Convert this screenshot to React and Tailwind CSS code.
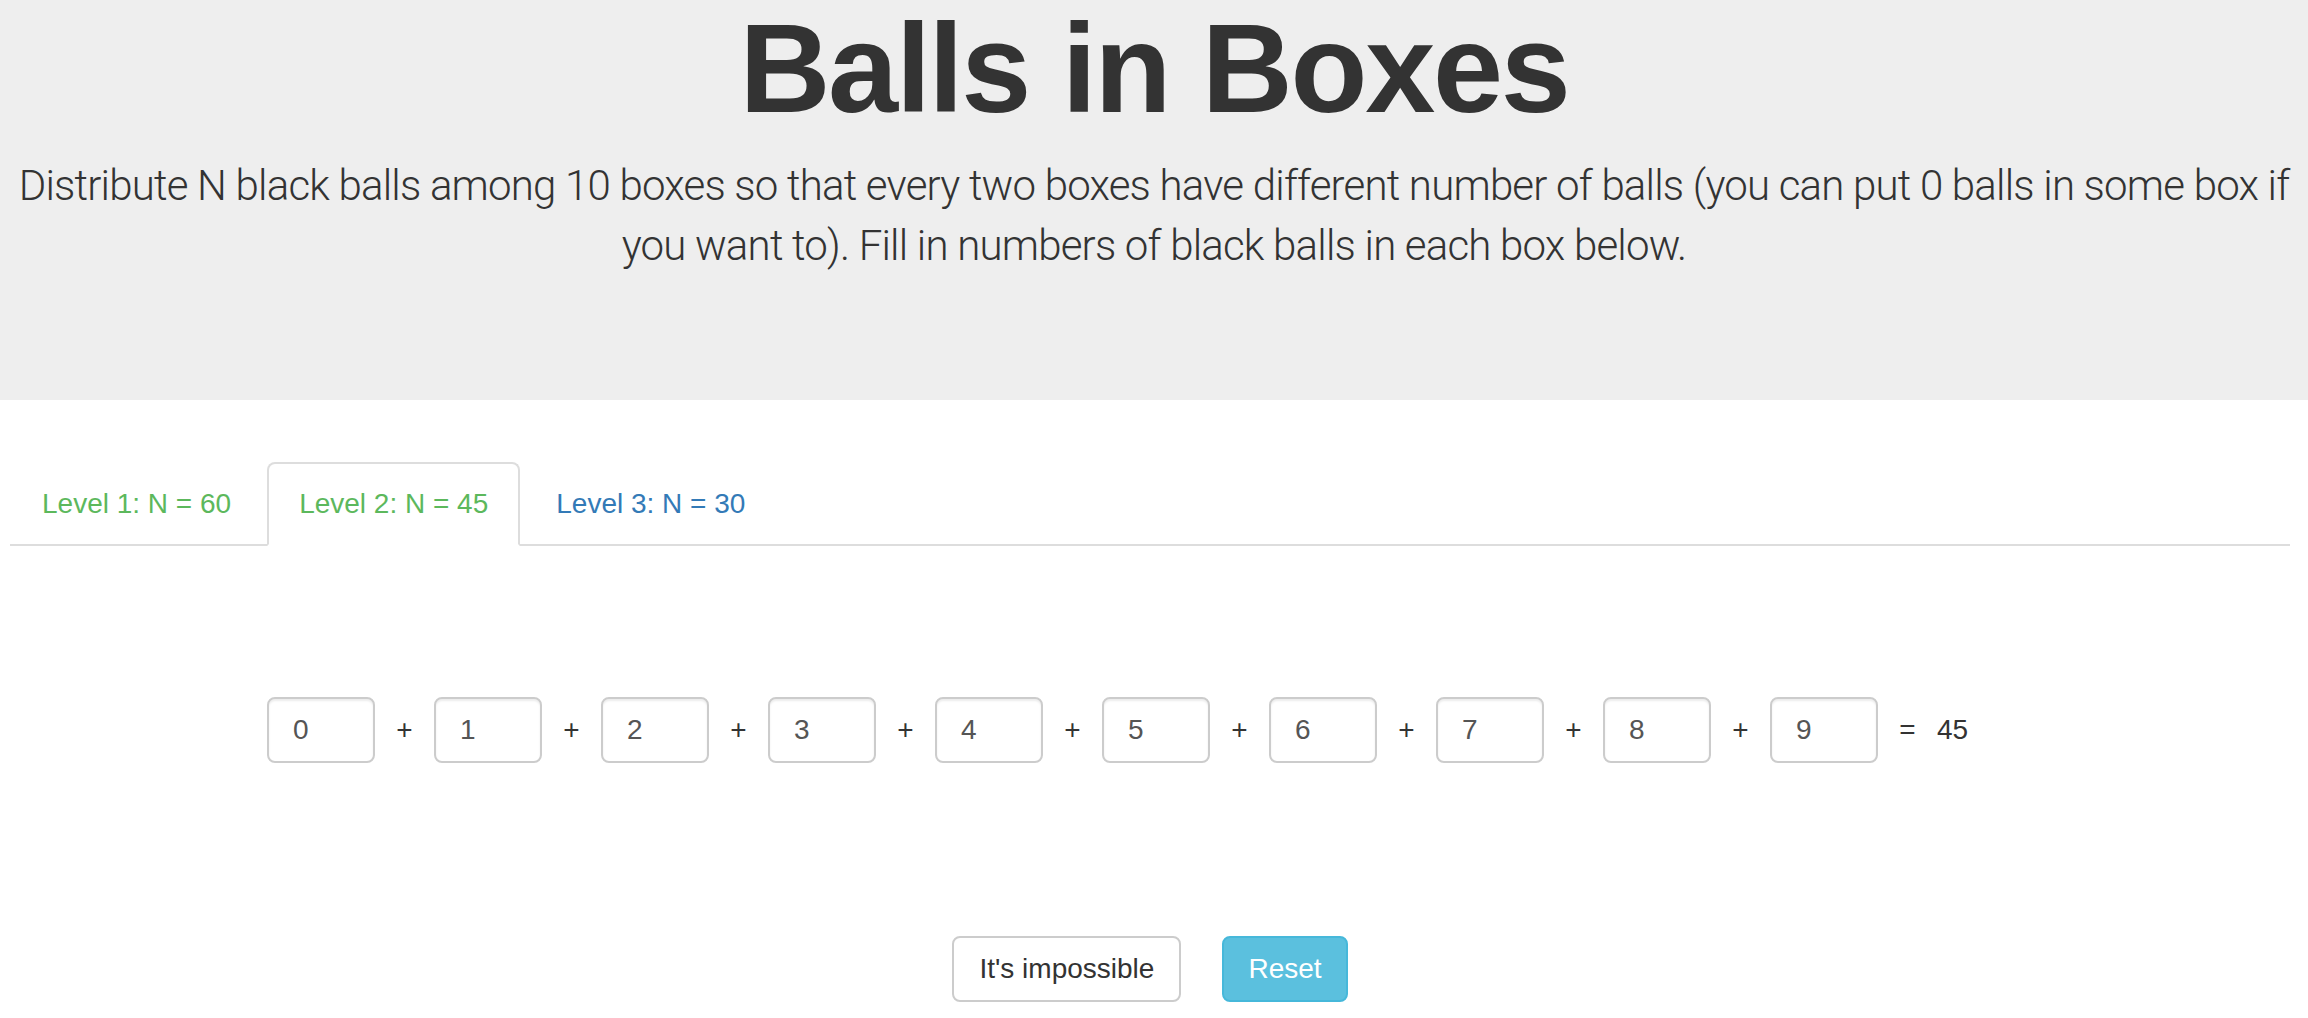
const boxes = [0, 1, 2, 3, 4, 5, 6, 7, 8, 9];

const tabs = [
  { label: "Level 1: N = 60", color: "text-[#5cb85c]", active: false },
  { label: "Level 2: N = 45", color: "text-[#5cb85c]", active: true },
  { label: "Level 3: N = 30", color: "text-[#337ab7]", active: false },
];

export default function App() {
  return (
    <div className="min-h-screen bg-white text-[#333] font-['Liberation_Sans',Arial,sans-serif]">
      {/* Header */}
      <div className="bg-[#eeeeee] px-[15px] pb-[124px] text-center">
        <h1 className="text-[126px] leading-[1.1] font-bold tracking-[-2.3px]">Balls in Boxes</h1>
        <p className="mt-[17px] text-[42px] leading-[60px] font-light tracking-[-0.8px] font-['Roboto','Liberation_Sans',sans-serif]">
          Distribute N black balls among 10 boxes so that every two boxes have different number of balls (you can put 0 balls in some box if you want to). Fill in numbers of black balls in each box below.
        </p>
      </div>

      {/* Tabs */}
      <ul className="mt-[62px] ml-[10px] mr-[18px] flex border-b-2 border-[#dddddd] text-[28px] leading-[40px]">
        {tabs.map((t) => (
          <li key={t.label} className="-mb-[2px]">
            <a
              href="#"
              className={
                "block mr-[4px] px-[30px] py-[20px] border-2 rounded-t-[8px] " +
                t.color +
                (t.active ? " bg-white border-[#dddddd] border-b-white" : " border-transparent")
              }
            >
              {t.label}
            </a>
          </li>
        ))}
      </ul>

      {/* Boxes */}
      <div className="mt-[151px] flex items-center pl-[267px] text-[28px]">
        {boxes.map((n, i) => (
          <div key={n} className="flex items-center">
            <input
              type="text"
              defaultValue={n}
              className="w-[108px] h-[66px] px-[24px] border-2 border-[#cccccc] rounded-[8px] text-[#555] bg-white shadow-[inset_0_2px_2px_rgba(0,0,0,0.075)] outline-none"
            />
            <span className="w-[59px] text-center">{i < boxes.length - 1 ? "+" : "="}</span>
          </div>
        ))}
        <span>45</span>
      </div>

      {/* Buttons */}
      <div className="mt-[173px] flex justify-center gap-[41px] pr-[8px]">
        <button className="h-[66px] px-[25px] border-2 border-[#cccccc] rounded-[8px] bg-white text-[28px] text-[#333]">
          It's impossible
        </button>
        <button className="h-[66px] px-[24px] border-2 border-[#46b8da] rounded-[8px] bg-[#5bc0de] text-[28px] text-white">
          Reset
        </button>
      </div>
    </div>
  );
}
